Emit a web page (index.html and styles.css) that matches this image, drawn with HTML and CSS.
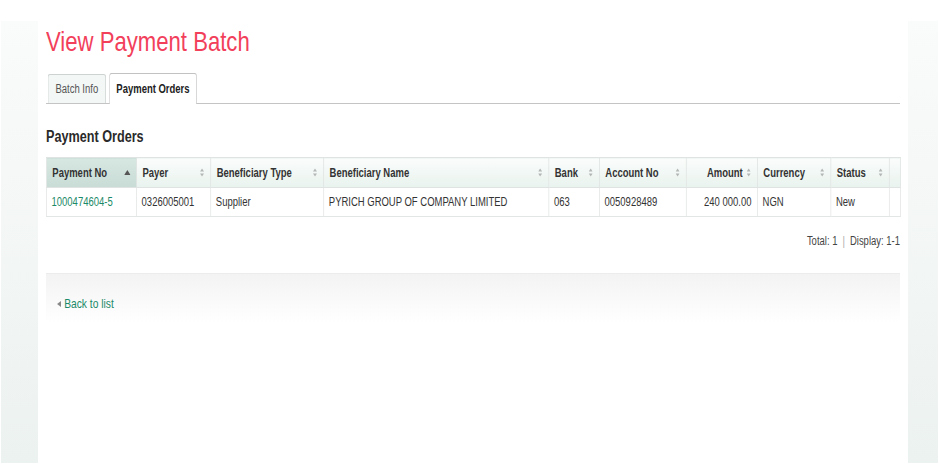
FILE: index.html
```html
<!DOCTYPE html>
<html>
<head>
<meta charset="utf-8">
<title>View Payment Batch</title>
<link rel="stylesheet" href="styles.css">
</head>
<body>
<div class="page">
  <div class="side side-left"></div>
  <div class="main">
    <div class="narrow">
      <h1 class="title">View Payment Batch</h1>
      <div class="tabs">
        <a class="tab">Batch Info</a>
        <a class="tab tab-active">Payment Orders</a>
      </div>
      <h2 class="section-title">Payment Orders</h2>
      <table class="grid">
        <colgroup>
          <col class="c1"><col class="c2"><col class="c3"><col class="c4"><col class="c5"><col class="c6"><col class="c7"><col class="c8"><col class="c9"><col class="c10">
        </colgroup>
        <thead>
          <tr>
            <th class="sorted"><span class="th-in"><span>Payment No</span><svg class="sort-asc" width="8" height="5" viewBox="0 0 8 5"><polygon points="0,5 4,0 8,5" fill="#555"/></svg></span></th>
            <th><span class="th-in"><span>Payer</span><svg class="sort" width="5" height="9" viewBox="0 0 5 9"><polygon points="0,3.6 2.5,0.5 5,3.6" fill="#b3b7b6"/><polygon points="0,5.4 5,5.4 2.5,8.5" fill="#b3b7b6"/></svg></span></th>
            <th><span class="th-in"><span>Beneficiary Type</span><svg class="sort" width="5" height="9" viewBox="0 0 5 9"><polygon points="0,3.6 2.5,0.5 5,3.6" fill="#b3b7b6"/><polygon points="0,5.4 5,5.4 2.5,8.5" fill="#b3b7b6"/></svg></span></th>
            <th><span class="th-in"><span>Beneficiary Name</span><svg class="sort" width="5" height="9" viewBox="0 0 5 9"><polygon points="0,3.6 2.5,0.5 5,3.6" fill="#b3b7b6"/><polygon points="0,5.4 5,5.4 2.5,8.5" fill="#b3b7b6"/></svg></span></th>
            <th><span class="th-in"><span>Bank</span><svg class="sort" width="5" height="9" viewBox="0 0 5 9"><polygon points="0,3.6 2.5,0.5 5,3.6" fill="#b3b7b6"/><polygon points="0,5.4 5,5.4 2.5,8.5" fill="#b3b7b6"/></svg></span></th>
            <th><span class="th-in"><span>Account No</span><svg class="sort" width="5" height="9" viewBox="0 0 5 9"><polygon points="0,3.6 2.5,0.5 5,3.6" fill="#b3b7b6"/><polygon points="0,5.4 5,5.4 2.5,8.5" fill="#b3b7b6"/></svg></span></th>
            <th><span class="th-in th-right"><span>Amount</span><svg class="sort" width="5" height="9" viewBox="0 0 5 9"><polygon points="0,3.6 2.5,0.5 5,3.6" fill="#b3b7b6"/><polygon points="0,5.4 5,5.4 2.5,8.5" fill="#b3b7b6"/></svg></span></th>
            <th><span class="th-in"><span>Currency</span><svg class="sort" width="5" height="9" viewBox="0 0 5 9"><polygon points="0,3.6 2.5,0.5 5,3.6" fill="#b3b7b6"/><polygon points="0,5.4 5,5.4 2.5,8.5" fill="#b3b7b6"/></svg></span></th>
            <th><span class="th-in"><span>Status</span><svg class="sort" width="5" height="9" viewBox="0 0 5 9"><polygon points="0,3.6 2.5,0.5 5,3.6" fill="#b3b7b6"/><polygon points="0,5.4 5,5.4 2.5,8.5" fill="#b3b7b6"/></svg></span></th>
            <th class="th-empty"></th>
          </tr>
        </thead>
        <tbody>
          <tr>
            <td><a class="link">1000474604-5</a></td>
            <td>0326005001</td>
            <td>Supplier</td>
            <td>PYRICH GROUP OF COMPANY LIMITED</td>
            <td>063</td>
            <td>0050928489</td>
            <td class="num">240 000.00</td>
            <td>NGN</td>
            <td>New</td>
            <td></td>
          </tr>
        </tbody>
      </table>
      <div class="pager">Total: 1 <span class="sep">|</span> Display: 1-1</div>
      <div class="footer-bar">
        <a class="back"><span class="back-arrow"></span>Back to list</a>
      </div>
    </div>
  </div>
  <div class="side side-right"></div>
</div>
</body>
</html>
```

FILE: styles.css
```css
html, body {
  margin: 0;
  padding: 0;
  background: #ffffff;
}
body {
  font-family: "Liberation Sans", Arial, sans-serif;
  font-size: 12px;
  color: #333333;
}
.page {
  display: flex;
  margin-top: 21px;
  height: 442px;
  padding-left: 1px;
}
.side {
  background: linear-gradient(to bottom, #fafbfb 0%, #ecf2f0 100%);
}
.side-left { width: 37px; }
.side-right { width: 30px; }
.main {
  width: 854px;
  padding: 0 8px;
  background: #ffffff;
  overflow: hidden;
}
/* the original page is rendered horizontally condensed */
.narrow {
  width: 1081px;
  transform: scaleX(0.79);
  transform-origin: 0 0;
}
.title {
  margin: 4px 0 0 0;
  font-size: 28px;
  line-height: 34px;
  font-weight: normal;
  color: #f2405b;
}
.tabs {
  margin-top: 14px;
  display: flex;
  align-items: flex-end;
  gap: 4px;
  padding-left: 2px;
  height: 30px;
  border-bottom: 1px solid #c4c4c4;
}
.tab {
  display: flex;
  align-items: center;
  height: 28px;
  padding: 0 9px;
  border: 1px solid #cdd3d1;
  border-bottom: none;
  border-radius: 3px 3px 0 0;
  background: #f3f7f6;
  color: #555;
  font-size: 12px;
}
.tab-active {
  height: 30px;
  margin-bottom: -1px;
  padding: 0 8px;
  background: #ffffff;
  border-color: #c2c2c2;
  color: #222;
  font-weight: bold;
}
.section-title {
  margin: 23px 0 0 0;
  font-size: 16px;
  line-height: 20px;
  font-weight: bold;
  color: #2a2a2a;
}
.grid {
  margin-top: 10px;
  width: 1081px;
  table-layout: fixed;
  border-collapse: collapse;
  border: 1px solid #dfe4e2;
}
.c1 { width: 114px; }
.c2 { width: 94px; }
.c3 { width: 143px; }
.c4 { width: 285px; }
.c5 { width: 64px; }
.c6 { width: 110px; }
.c7 { width: 90px; }
.c8 { width: 93px; }
.c9 { width: 74px; }
.c10 { width: 14px; }
.grid th {
  height: 29px;
  padding: 0 8px 0 7px;
  border: 1px solid #dfe4e2;
  background: linear-gradient(to bottom, #fafcfb 0%, #e9f3ee 100%);
  text-align: left;
  font-weight: bold;
  color: #333;
  white-space: nowrap;
}
.grid th.sorted {
  background: linear-gradient(to bottom, #d7e7e2 0%, #c9dcd6 100%);
}
.grid th.th-empty {
  padding: 0;
}
.th-in {
  display: flex;
  align-items: center;
  justify-content: space-between;
}
.th-right {
  justify-content: flex-end;
  gap: 5px;
}
.sort {
  flex: none;
  display: block;
}
.sort-asc {
  flex: none;
  display: block;
  margin-right: -1px;
}
.grid td {
  height: 28px;
  padding: 0 6px;
  border: 1px solid #e2e6e5;
  white-space: nowrap;
  color: #333;
}
.grid td.num {
  text-align: right;
  padding-right: 7px;
}
.link {
  color: #1b8a68;
  text-decoration: none;
}
.pager {
  margin-top: 16px;
  text-align: right;
  color: #444;
  line-height: 16px;
}
.sep {
  color: #aaa;
  padding: 0 3px;
}
.footer-bar {
  margin-top: 24px;
  height: 50px;
  border-top: 1px solid #ececec;
  background: linear-gradient(to bottom, #f3f3f3 0%, #ffffff 100%);
  padding: 22px 0 0 14px;
  box-sizing: border-box;
}
.back {
  display: inline-flex;
  align-items: center;
  color: #1b8a68;
  font-size: 13px;
  line-height: 16px;
  text-decoration: none;
}
.back-arrow {
  width: 0;
  height: 0;
  border-top: 3px solid transparent;
  border-bottom: 3px solid transparent;
  border-right: 5px solid #888;
  margin-right: 4px;
}
```
